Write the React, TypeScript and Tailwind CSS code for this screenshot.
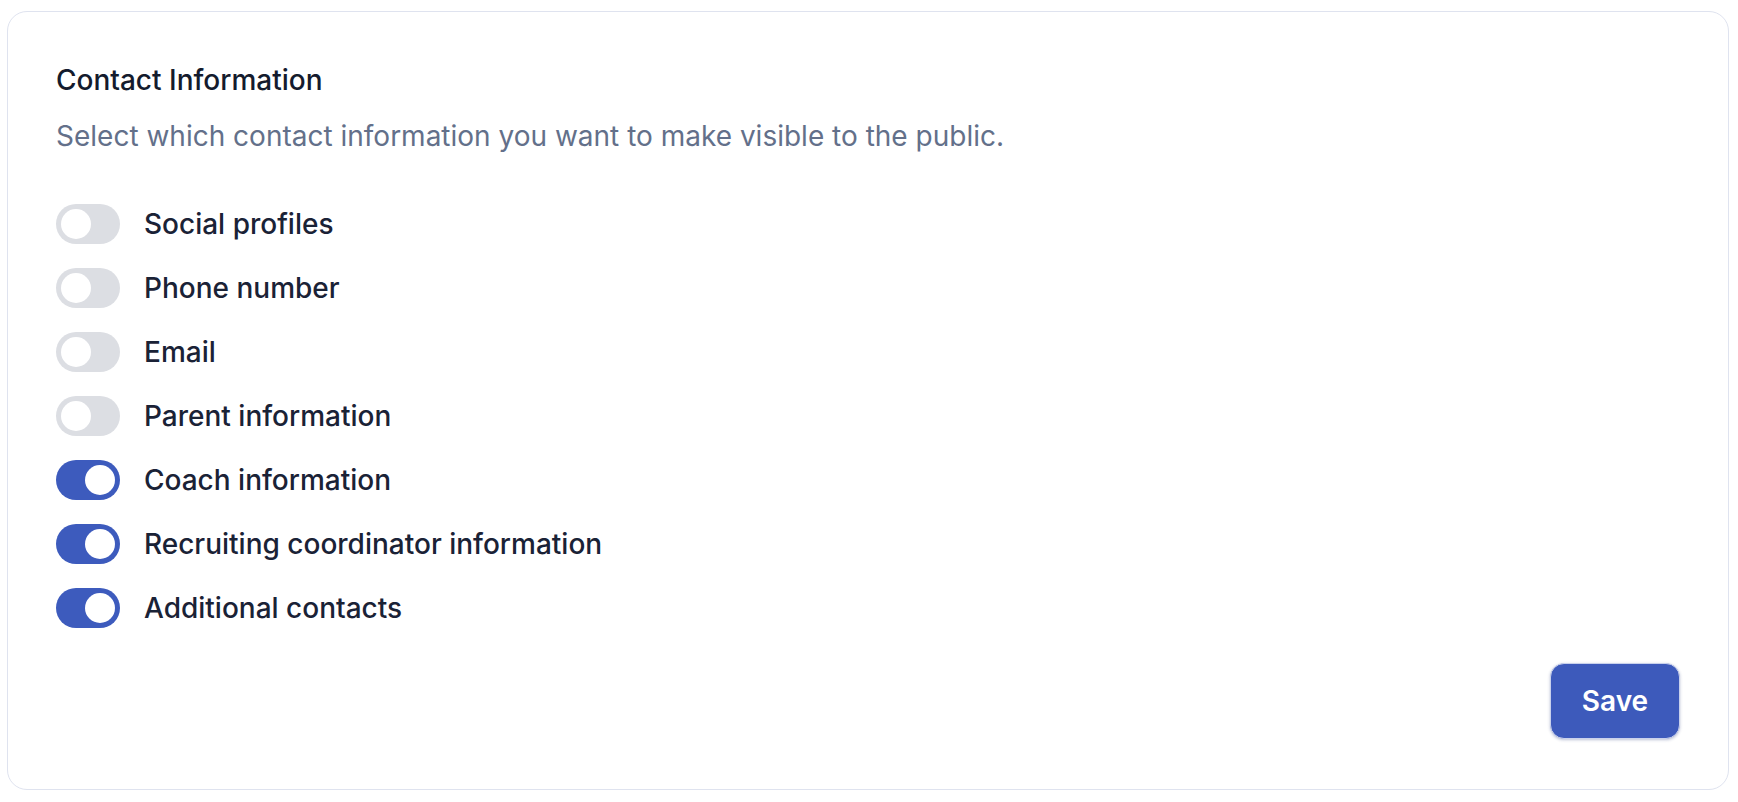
import React, { useState } from "react";

const items = [
  { id: "social", label: "Social profiles", on: false },
  { id: "phone", label: "Phone number", on: false },
  { id: "email", label: "Email", on: false },
  { id: "parent", label: "Parent information", on: false },
  { id: "coach", label: "Coach information", on: true },
  { id: "recruiting", label: "Recruiting coordinator information", on: true },
  { id: "additional", label: "Additional contacts", on: true },
];

function Toggle({ on, onClick }: { on: boolean; onClick: () => void }) {
  return (
    <button
      type="button"
      onClick={onClick}
      className={
        "flex h-[40px] w-[64px] shrink-0 items-center rounded-full p-[5px] " +
        (on ? "justify-end bg-[#3d5bbd]" : "justify-start bg-[#dcdee3]")
      }
    >
      <span className="block h-[30px] w-[30px] rounded-full bg-white" />
    </button>
  );
}

export default function App() {
  const [state, setState] = useState<Record<string, boolean>>(
    Object.fromEntries(items.map((i) => [i.id, i.on]))
  );

  return (
    <div className="min-h-screen bg-white pt-[11px] pl-[7px] pr-[9px] font-['Inter',sans-serif]">
      <div className="rounded-[20px] border border-[#dfe3ef] bg-white px-[48px] pt-[48px] pb-[50px]">
        <h2 className="text-[28px] leading-[40px] font-medium text-[#141b2d]">
          Contact Information
        </h2>
        <p className="mt-4 text-[28px] leading-[40px] text-[#63708a]">
          Select which contact information you want to make visible to the public.
        </p>

        <div className="mt-[48px] flex flex-col gap-[24px]">
          {items.map((item) => (
            <div key={item.id} className="flex items-center gap-[24px]">
              <Toggle
                on={state[item.id]}
                onClick={() =>
                  setState((s) => ({ ...s, [item.id]: !s[item.id] }))
                }
              />
              <span className="text-[28px] leading-[40px] font-medium text-[#1a2236]">
                {item.label}
              </span>
            </div>
          ))}
        </div>

        <div className="mt-[35px] flex justify-end">
          <button
            type="button"
            className="h-[76px] w-[130px] rounded-[14px] border border-[#c9d1ec] bg-[#3d5abb] text-[28px] font-semibold text-white shadow-[0_1px_3px_rgba(30,50,120,0.3)]"
          >
            Save
          </button>
        </div>
      </div>
    </div>
  );
}
